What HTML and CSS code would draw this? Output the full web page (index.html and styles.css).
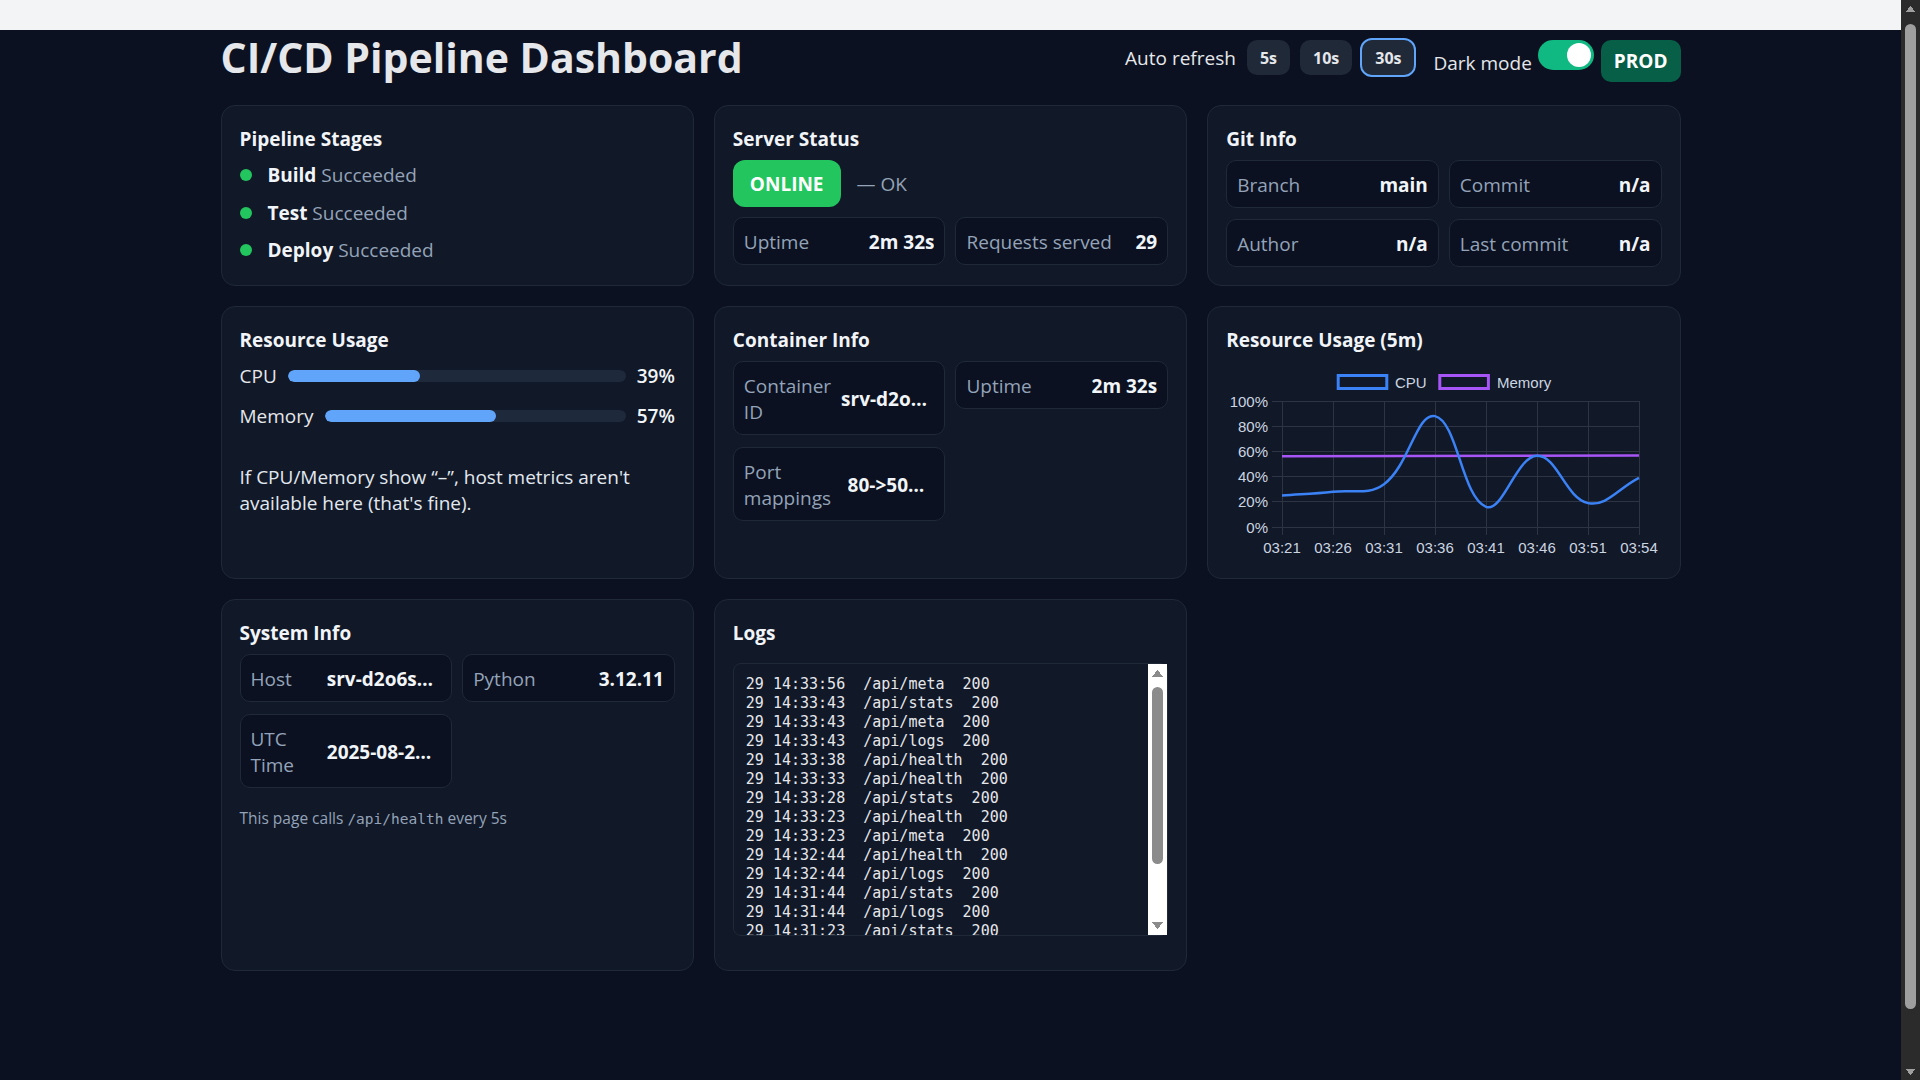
FILE: index.html
```html
<!DOCTYPE html>
<html lang="en">
<head>
<meta charset="utf-8">
<title>CI/CD Pipeline Dashboard</title>
<link rel="stylesheet" href="styles.css">
</head>
<body>
<div class="page">
  <div class="topbar"></div>
  <div class="app">
    <header class="header">
      <h1 class="title">CI/CD Pipeline Dashboard</h1>
      <div class="controls">
        <div class="refresh">
          <span class="refresh-label">Auto refresh</span>
          <button class="chip">5s</button>
          <button class="chip">10s</button>
          <button class="chip chip-active">30s</button>
        </div>
        <label class="darkmode">
          <span class="darkmode-label">Dark mode</span>
          <span class="toggle"><span class="knob"></span></span>
        </label>
        <span class="env">PROD</span>
      </div>
    </header>

    <main class="grid">
      <section class="card">
        <h2 class="card-title">Pipeline Stages</h2>
        <ul class="stages">
          <li class="stage"><span class="dot"></span><span><b class="stage-name">Build</b> <span class="stage-status">Succeeded</span></span></li>
          <li class="stage"><span class="dot"></span><span><b class="stage-name">Test</b> <span class="stage-status">Succeeded</span></span></li>
          <li class="stage"><span class="dot"></span><span><b class="stage-name">Deploy</b> <span class="stage-status">Succeeded</span></span></li>
        </ul>
      </section>

      <section class="card">
        <h2 class="card-title">Server Status</h2>
        <div class="status-row">
          <span class="badge-online">ONLINE</span>
          <span class="status-text">— OK</span>
        </div>
        <div class="tiles">
          <div class="tile"><span class="tile-label">Uptime</span><span class="tile-value">2m 32s</span></div>
          <div class="tile"><span class="tile-label">Requests served</span><span class="tile-value">29</span></div>
        </div>
      </section>

      <section class="card">
        <h2 class="card-title">Git Info</h2>
        <div class="tiles">
          <div class="tile"><span class="tile-label">Branch</span><span class="tile-value">main</span></div>
          <div class="tile"><span class="tile-label">Commit</span><span class="tile-value">n/a</span></div>
          <div class="tile"><span class="tile-label">Author</span><span class="tile-value">n/a</span></div>
          <div class="tile"><span class="tile-label">Last commit</span><span class="tile-value">n/a</span></div>
        </div>
      </section>

      <section class="card">
        <h2 class="card-title">Resource Usage</h2>
        <div class="meters">
          <div class="meter">
            <span class="meter-label">CPU</span>
            <div class="bar"><div class="fill" style="width:39%"></div></div>
            <span class="meter-value">39%</span>
          </div>
          <div class="meter">
            <span class="meter-label">Memory</span>
            <div class="bar"><div class="fill" style="width:57%"></div></div>
            <span class="meter-value">57%</span>
          </div>
        </div>
        <p class="note">If CPU/Memory show “–”, host metrics aren't available here (that's fine).</p>
      </section>

      <section class="card">
        <h2 class="card-title">Container Info</h2>
        <div class="tiles tiles-spaced">
          <div class="tile"><span class="tile-label">Container ID</span><span class="tile-value">srv-d2o6s3jipnbc73a1ahg0-hibernate-6f9d7c8b5</span></div>
          <div class="tile"><span class="tile-label">Uptime</span><span class="tile-value">2m 32s</span></div>
          <div class="tile"><span class="tile-label">Port mappings</span><span class="tile-value">80-&gt;5000/tcp</span></div>
        </div>
      </section>

      <section class="card">
        <h2 class="card-title">Resource Usage (5m)</h2>
        <svg class="chart" viewBox="0 0 436 200" width="436" height="200">
          <rect x="112.2" y="15.5" width="48.6" height="13" fill="none" stroke="#3b82f6" stroke-width="3"/>
          <text class="chart-text" x="169" y="27.5">CPU</text>
          <rect x="213.8" y="15.5" width="48.6" height="13" fill="none" stroke="#a855f7" stroke-width="3"/>
          <text class="chart-text" x="271" y="27.5">Memory</text>
          <g stroke="#2d3544" stroke-width="1">
            <line x1="46" y1="41.5" x2="413" y2="41.5"/>
            <line x1="46" y1="66.5" x2="413" y2="66.5"/>
            <line x1="46" y1="91.5" x2="413" y2="91.5"/>
            <line x1="46" y1="116.5" x2="413" y2="116.5"/>
            <line x1="46" y1="141.5" x2="413" y2="141.5"/>
            <line x1="46" y1="167.5" x2="413" y2="167.5"/>
            <line x1="56.5" y1="41" x2="56.5" y2="175"/>
            <line x1="107.5" y1="41" x2="107.5" y2="175"/>
            <line x1="158.5" y1="41" x2="158.5" y2="175"/>
            <line x1="209.5" y1="41" x2="209.5" y2="175"/>
            <line x1="260.5" y1="41" x2="260.5" y2="175"/>
            <line x1="311.5" y1="41" x2="311.5" y2="175"/>
            <line x1="362.5" y1="41" x2="362.5" y2="175"/>
            <line x1="413.5" y1="41" x2="413.5" y2="175"/>
          </g>
          <g class="chart-text" text-anchor="end">
            <text x="42" y="46.5">100%</text>
            <text x="42" y="71.7">80%</text>
            <text x="42" y="96.9">60%</text>
            <text x="42" y="122.1">40%</text>
            <text x="42" y="147.3">20%</text>
            <text x="42" y="172.5">0%</text>
          </g>
          <g class="chart-text" text-anchor="middle">
            <text x="56" y="192.5">03:21</text>
            <text x="107" y="192.5">03:26</text>
            <text x="158" y="192.5">03:31</text>
            <text x="209" y="192.5">03:36</text>
            <text x="260" y="192.5">03:41</text>
            <text x="311" y="192.5">03:46</text>
            <text x="362" y="192.5">03:51</text>
            <text x="413" y="192.5">03:54</text>
          </g>
          <path d="M56,96.2 L413,95.6" fill="none" stroke="#a855f7" stroke-width="2.5"/>
          <path d="M56,135.5 C76.4,133.98 86.7,133.95 107,131.7 C127.5,129.43 142.6,135.6 158,124.2 C183.4,105.4 190.6,52.0 209,56.1 C231.4,61.1 235.9,137.4 260,146.8 C276.7,153.3 290.2,96.55 311,95.8 C331,95.07 339.6,138.24 362,143.1 C380.4,147.08 392.6,127.98 413,117.9" fill="none" stroke="#3b82f6" stroke-width="2.5"/>
        </svg>
      </section>

      <section class="card">
        <h2 class="card-title">System Info</h2>
        <div class="tiles tiles-spaced">
          <div class="tile"><span class="tile-label">Host</span><span class="tile-value">srv-d2o6s3jipnbc73a1ahg0-hibernate-6f9d7c8b5</span></div>
          <div class="tile"><span class="tile-label">Python</span><span class="tile-value">3.12.11</span></div>
          <div class="tile"><span class="tile-label">UTC Time</span><span class="tile-value">2025-08-29T14:34:02Z</span></div>
        </div>
        <p class="small-note">This page calls <code class="code">/api/health</code> every 5s</p>
      </section>

      <section class="card">
        <h2 class="card-title">Logs</h2>
        <div class="logs">
          <pre class="logs-text">29 14:33:56  /api/meta  200
29 14:33:43  /api/stats  200
29 14:33:43  /api/meta  200
29 14:33:43  /api/logs  200
29 14:33:38  /api/health  200
29 14:33:33  /api/health  200
29 14:33:28  /api/stats  200
29 14:33:23  /api/health  200
29 14:33:23  /api/meta  200
29 14:32:44  /api/health  200
29 14:32:44  /api/logs  200
29 14:31:44  /api/stats  200
29 14:31:44  /api/logs  200
29 14:31:23  /api/stats  200
29 14:31:23  /api/meta  200
29 14:31:18  /api/health  200
29 14:31:13  /api/health  200</pre>
          <div class="sb sb-light" aria-hidden="true">
            <span class="sb-arrow sb-up"></span>
            <span class="sb-track"><span class="sb-thumb sb-thumb-logs"></span></span>
            <span class="sb-arrow sb-down"></span>
          </div>
        </div>
      </section>
    </main>
  </div>
</div>
<div class="sb sb-dark page-scrollbar" aria-hidden="true">
  <span class="sb-arrow sb-up"></span>
  <span class="sb-track"><span class="sb-thumb sb-thumb-page"></span></span>
  <span class="sb-arrow sb-down"></span>
</div>
</body>
</html>
```

FILE: styles.css
```css
* {
  box-sizing: border-box;
}

html {
  background: #0b1120;
}

body {
  margin: 0;
  padding-right: 19px;
  background: #0b1120;
  color: #e5e7eb;
  font-family: "Open Sans", "Noto Sans", sans-serif;
  font-size: 19px;
  line-height: 26px;
}

.page {
  width: 100%;
}

.topbar {
  height: 30px;
  background: #f3f4f6;
}

.app {
  max-width: 1460px;
  margin: 0 auto;
  min-height: calc(100vh - 30px);
  padding-top: 3px;
}

/* fake scrollbars */
.sb {
  display: flex;
  flex-direction: column;
  width: 19px;
  flex: none;
}

.sb-dark {
  --sb-bg: #2b2b2b;
  --sb-fg: #9f9f9f;
  background: var(--sb-bg);
}

.sb-light {
  --sb-bg: #ffffff;
  --sb-fg: #8b8b8b;
  background: var(--sb-bg);
}

.page-scrollbar {
  position: fixed;
  top: 0;
  right: 0;
  height: 100vh;
}

.sb-arrow {
  display: block;
  height: 17px;
  flex: none;
  background-repeat: no-repeat;
  background-position: center;
  background-size: 11px 6px;
}

.sb-up {
  background-image: conic-gradient(from 140deg at 50% 0, var(--sb-fg) 80deg, transparent 0);
}

.sb-down {
  background-image: conic-gradient(from -40deg at 50% 100%, var(--sb-fg) 80deg, transparent 0);
}

.sb-track {
  display: block;
  flex: 1;
  padding: 7px 4px 0;
}

.sb-thumb {
  display: block;
  width: 11px;
  border-radius: 6px;
  background: var(--sb-fg);
}

.sb-thumb-page {
  height: 985px;
}

.sb-light .sb-arrow {
  height: 19px;
  background-size: 11px 7px;
}

.sb-light .sb-track {
  padding-top: 4px;
}

.sb-thumb-logs {
  height: 177px;
}

/* header */
.header {
  display: flex;
  justify-content: space-between;
  align-items: flex-start;
  margin-bottom: 23px;
}

.title {
  margin: 0;
  font-size: 41px;
  line-height: 48px;
  font-weight: 700;
  color: #e5e7eb;
}

.controls {
  display: flex;
  align-items: flex-start;
  margin-top: 7px;
}

.refresh {
  display: flex;
  align-items: center;
  gap: 10px;
}

.refresh-label {
  color: #e5e7eb;
  margin-right: 1px;
}

.chip {
  height: 35px;
  padding: 0 13px;
  border: 0;
  border-radius: 10px;
  background: #1f2937;
  color: #e5e7eb;
  font-family: "Open Sans", "Noto Sans", sans-serif;
  font-size: 16px;
  font-weight: 700;
}

.chip-active {
  outline: 2px solid #60a5fa;
}

.darkmode {
  display: flex;
  align-items: baseline;
  gap: 6px;
  margin-left: 19px;
}

.toggle {
  display: block;
  position: relative;
  width: 56px;
  height: 30px;
  border-radius: 15px;
  background: #10b981;
}

.knob {
  position: absolute;
  top: 3px;
  right: 3px;
  width: 24px;
  height: 24px;
  border-radius: 50%;
  background: #ffffff;
}

.env {
  display: flex;
  align-items: center;
  height: 42px;
  margin-left: 7px;
  padding: 0 13px;
  border-radius: 10px;
  background: #065f46;
  color: #ffffff;
  font-weight: 700;
}

/* grid */
.grid {
  display: grid;
  grid-template-columns: repeat(3, 1fr);
  gap: 20px;
  align-items: stretch;
}

.card {
  background: #111827;
  border: 1px solid #1f2937;
  border-radius: 14px;
  padding: 19px 18px 18px;
  min-width: 0;
}

.card-title {
  margin: 0 0 7px;
  font-size: 19px;
  line-height: 28px;
  font-weight: 700;
  color: #f1f5f9;
}

/* stages */
.stages {
  list-style: none;
  margin: 0;
  padding: 0;
  display: flex;
  flex-direction: column;
  gap: 7.5px;
}

.stage {
  display: flex;
  align-items: center;
  gap: 16px;
  height: 30px;
}

.dot {
  width: 12px;
  height: 12px;
  border-radius: 50%;
  background: #22c55e;
  flex: none;
}

.stage-name {
  font-weight: 700;
  color: #f1f5f9;
}

.stage-status {
  color: #94a3b8;
}

/* server status */
.status-row {
  display: flex;
  align-items: center;
  gap: 16px;
  margin-bottom: 10px;
}

.badge-online {
  display: flex;
  align-items: center;
  height: 47px;
  padding: 1px 17px 0;
  border-radius: 12px;
  background: #22c55e;
  color: #ffffff;
  font-weight: 700;
}

.status-text {
  color: #94a3b8;
}

/* tiles */
.tiles {
  display: grid;
  grid-template-columns: 1fr 1fr;
  column-gap: 10px;
  row-gap: 11px;
  align-items: start;
}

.tiles-spaced {
  margin-top: 2px;
  row-gap: 12px;
}

.tile {
  display: flex;
  align-items: center;
  justify-content: space-between;
  gap: 10px;
  padding: 11px 10px 9px;
  border: 1px solid #1f2937;
  border-radius: 10px;
  background: #0b1120;
  min-width: 0;
}

.tile-label {
  flex: 1 1 auto;
  color: #94a3b8;
}

.tile-value {
  flex: 0 1 auto;
  max-width: 60%;
  min-width: 0;
  overflow: hidden;
  text-overflow: ellipsis;
  white-space: nowrap;
  text-align: right;
  font-weight: 700;
  color: #f1f5f9;
}

/* meters */
.meters {
  display: flex;
  flex-direction: column;
  gap: 9.5px;
}

.meter {
  display: flex;
  align-items: center;
  gap: 11px;
  height: 30px;
}

.meter-label {
  color: #e5e7eb;
}

.bar {
  flex: 1;
  height: 12px;
  border-radius: 6px;
  background: #1e293b;
  overflow: hidden;
}

.fill {
  height: 100%;
  border-radius: 6px;
  background: #60a5fa;
}

.meter-value {
  font-weight: 600;
  color: #f1f5f9;
}

.note {
  margin: 33px 0 0;
  color: #e2e8f0;
}

/* chart */
.chart {
  display: block;
  margin-top: -1px;
}

.chart-text {
  font-family: "Liberation Sans", Arial, sans-serif;
  font-size: 15px;
  fill: #cbd5e1;
}

/* system info */
.small-note {
  margin: 19px 0 0;
  font-size: 15.5px;
  line-height: 22px;
  color: #94a3b8;
}

.code {
  font-family: "DejaVu Sans Mono", "Liberation Mono", monospace;
  font-size: 14.5px;
}

/* logs */
.logs {
  display: flex;
  margin: 16px 0;
  height: 273px;
  border: 1px solid #1f2937;
  border-radius: 8px;
  background: #111827;
}

.logs-text {
  flex: 1;
  min-width: 0;
  margin: 0;
  padding: 11px 12px;
  overflow: hidden;
  color: #e5e7eb;
  font-family: "DejaVu Sans Mono", "Liberation Mono", monospace;
  font-size: 15px;
  line-height: 19px;
  white-space: pre;
}
```
